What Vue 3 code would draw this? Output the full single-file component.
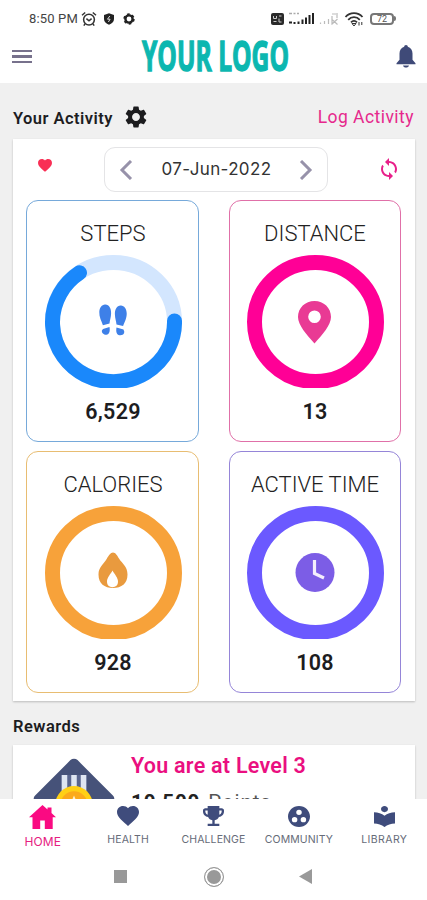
<template>
  <div class="phone">
    <div class="status-bar">
      <span class="clock">8:50 PM</span>
      <svg class="alarm" viewBox="0 0 16 16">
        <circle cx="8" cy="8.6" r="5.4" />
        <path d="M1 4.2 4.2 1.5M15 4.2 11.8 1.5M5.4 7.6 8 9.8l2.6-2.2M4 13l-1.2 1.6M12 13l1.2 1.6" />
      </svg>
      <svg class="shield" viewBox="0 0 12 12">
        <path d="M6 .3 11 2v4c0 2.800-2.200 4.800-5 5.800C3.200 10.800 1 8.800 1 6V2z" />
        <path class="bolt" d="M6.800 3 4.500 6.200h2.600L5.400 9" />
      </svg>
      <svg class="cog-small" viewBox="0 0 12 12">
        <circle cx="6" cy="6" r="3.600" />
        <circle class="teeth" cx="6" cy="6" r="4.900" />
      </svg>
      <span class="spacer"></span>
      <svg class="volte" viewBox="0 0 13 12">
        <rect width="13" height="12" rx="2" />
        <path d="M2.500 3v2.500h3V3M8 3h2.500M2.500 8.500h3M8 5.500v3.500h2.500" />
      </svg>
      <svg class="signal" viewBox="0 0 27 13">
        <path class="tiny" d="M1 1.500h3M5.500 1.500h2M9 1.500h2" />
        <path d="M1 10.500h3M6.500 12v-2M10.500 12V9.500M14.500 12V7.500M18 12V5.500M21.500 12V3M25 12V1" />
      </svg>
      <svg class="signal weak" viewBox="0 0 20 13">
        <path d="M1.500 12v-1.500M5.500 12V9M9.500 12V7M13 12V4M18 6V1M12.500 7l6 5.500M18.500 7l-6 5.500M13 2h4" />
      </svg>
      <svg class="wifi" viewBox="0 0 20 14">
        <path d="M1.500 5C6-.2 14-.2 18.500 5M4.200 7.800c3.200-3.600 8.400-3.600 11.600 0M7 10.300c1.800-1.800 4.200-1.800 6 0" />
        <path class="dot" d="M8 11.500h4L10 14zM15 10v3.500M17.800 10v3" />
      </svg>
      <span class="battery">72</span>
      <i class="battery-tip"></i>
    </div>

    <header class="app-bar">
      <div class="burger"><i></i><i></i><i></i></div>
      <svg class="logo" viewBox="0 0 148 40">
        <text x="0" y="34.500" textLength="147" lengthAdjust="spacingAndGlyphs">YOUR LOGO</text>
      </svg>
      <svg class="bell" viewBox="0 0 20 23">
        <path d="M10 0c1.100 0 1.800.8 1.800 1.800 3 .9 4.700 3.600 4.700 6.700v6.300l3 3.400v1H.5v-1l3-3.400V8.500c0-3.100 1.700-5.800 4.700-6.700C8.200.8 8.900 0 10 0zM7 20.600h6c-.4 1.500-1.500 2-3 2s-2.600-.5-3-2z" />
      </svg>
    </header>

    <main class="content">
      <div class="section-head">
        <h2>Your Activity</h2>
        <svg class="gear" viewBox="2 2 20 20">
          <path :d="gearPath" />
        </svg>
        <a class="log-link">Log Activity</a>
      </div>

      <section class="card activity">
        <div class="date-row">
          <svg class="heart" viewBox="2 3 20 18.500">
            <path :d="heartPath" />
          </svg>
          <div class="date-picker">
            <svg class="chevron" viewBox="0 0 14 20"><path d="M12 1 3 10l9 9" /></svg>
            <span>07-Jun-2022</span>
            <svg class="chevron" viewBox="0 0 14 20"><path d="m2 1 9 9-9 9" /></svg>
          </div>
          <svg class="sync" viewBox="4 1 16 22">
            <path d="M12 6v3L8 5l4-4v3c4.420 0 8 3.580 8 8 0 1.570-.46 3.030-1.240 4.260L17.300 14.800c.45-.83.7-1.790.7-2.800 0-3.310-2.690-6-6-6zM5.240 7.740 6.700 9.200C6.260 10.040 6 10.990 6 12c0 3.310 2.690 6 6 6v-3l4 4-4 4v-3c-4.420 0-8-3.580-8-8 0-1.570.46-3.030 1.240-4.260z" />
          </svg>
        </div>

        <div class="tiles">
          <div v-for="tile in tiles" :key="tile.name" :class="['tile', tile.name]">
            <h3>{{ tile.title }}</h3>
            <svg class="ring" viewBox="0 0 137 133">
              <ellipse class="track" cx="68.500" cy="67" rx="61" ry="59.500" />
              <path v-if="tile.arc" class="arc" :d="tile.arc" />
              <g v-if="tile.name === 'steps'" class="glyph">
                <path d="M60 49.500c4-.3 6.300 4 6.100 9-.1 4-1.300 6.500-1.600 10l-6.600 1.800C56.500 66 54 62 54.300 57c.2-4.200 2.500-7.300 5.700-7.500z" />
                <path d="M76 50.500c-4-.3-6.300 4-6.100 9 .1 4 1.300 6.500 1.600 10l6.600 1.500c1.400-4 3.900-8 3.600-13-.2-4.200-2.500-7.300-5.700-7.500z" />
                <path d="m58 74 6.500-2c.8 4-.2 7.500-3 7.700-2.500.2-5-1.500-4.600-4.200zM78.500 74.500l-7-2c-.8 4 .2 7.500 3 7.700 2.500.2 5-.8 4.800-3.500z" />
              </g>
              <path
                v-else-if="tile.name === 'distance'"
                class="glyph"
                fill-rule="evenodd"
                d="M67.500 46c9.300 0 16.500 6.800 16.500 16 0 8-8.500 17.500-16.500 26.500C59.500 79.500 51 70 51 62c0-9.200 7.200-16 16.500-16zm0 9.500a6.300 6.300 0 1 0 0 12.600 6.300 6.300 0 0 0 0-12.600z"
              />
              <g v-else-if="tile.name === 'calories'">
                <path class="glyph" d="M68 46.500c2.500 0 4.200 3 6 6 3.300 5.300 8.500 8 8.500 16 0 9-6 13.500-14.500 13.500s-14.500-4.500-14.500-13.500c0-7.500 5-10 8.300-15.700 1.800-3.200 3.700-6.300 6.200-6.300z" />
                <path class="cutout" d="M67.500 64.500c2 3.800 5.500 7 5.500 11 0 3.700-2.200 5.700-5.500 5.700S62 79.200 62 75.500c0-4 3.500-7.200 5.500-11z" />
              </g>
              <g v-else>
                <circle class="glyph" cx="68" cy="66.500" r="19.500" />
                <path class="hands" d="M67.500 54v13.500l9.500 4.500" />
              </g>
            </svg>
            <strong>{{ tile.value }}</strong>
          </div>
        </div>
      </section>

      <h2 class="rewards-title">Rewards</h2>
      <section class="card rewards">
        <svg class="badge" viewBox="0 0 82 82">
          <rect class="diamond" x="11" y="11" width="60" height="60" rx="5" transform="rotate(45 41 41)" />
          <path class="ribbon" d="M28 17h26v17H28z" />
          <path class="stripes" d="M31.500 17v17M41 17v17M50.500 17v17" />
          <circle class="coin" cx="41" cy="46.700" r="18.700" />
          <circle class="coin-inner" cx="41" cy="46.700" r="13.500" />
          <path class="star" d="m41 37.500 2.500 6h6l-5 4 2 6-5.500-3.500-5.500 3.500 2-6-5-4h6z" />
        </svg>
        <div class="reward-text">
          <p class="level">You are at Level 3</p>
          <p class="points"><b>10,500</b> Points</p>
        </div>
      </section>
    </main>

    <nav class="tab-bar">
      <div v-for="tab in tabs" :key="tab.label" :class="['tab', tab.name, { active: tab.active }]">
        <svg :viewBox="tab.box" preserveAspectRatio="none">
          <path :d="tab.path" fill-rule="evenodd" />
        </svg>
        <span>{{ tab.label }}</span>
      </div>
    </nav>

    <div class="system-nav">
      <i class="recent"></i>
      <i class="home-key"></i>
      <svg class="back" viewBox="0 0 13 15"><path d="M13 0v15L0 7.500z" /></svg>
    </div>
  </div>
</template>

<script setup>
const gearPath =
  'M19.140 12.940c.04-.3.06-.61.06-.94s-.02-.64-.07-.94l2.030-1.580c.18-.14.23-.41.12-.61l-1.920-3.320c-.12-.22-.37-.29-.59-.22l-2.390.96c-.5-.38-1.030-.7-1.620-.94l-.36-2.540c-.04-.24-.24-.41-.48-.41h-3.840c-.24 0-.43.17-.47.41l-.36 2.540c-.59.24-1.130.57-1.620.94l-2.390-.96c-.22-.08-.47 0-.59.22L2.740 8.870c-.12.21-.08.47.12.61l2.030 1.580c-.05.3-.09.63-.09.94s.02.64.07.94l-2.030 1.580c-.18.14-.23.41-.12.61l1.920 3.320c.12.22.37.29.59.22l2.390-.96c.5.38 1.030.7 1.620.94l.36 2.540c.05.24.24.41.48.41h3.840c.24 0 .44-.17.47-.41l.36-2.540c.59-.24 1.130-.56 1.620-.94l2.390.96c.22.08.47 0 .59-.22l1.920-3.320c.12-.22.07-.47-.12-.61l-2.010-1.580zM12 15.600c-1.980 0-3.600-1.620-3.600-3.600s1.620-3.600 3.600-3.600 3.600 1.620 3.600 3.600-1.620 3.600-3.600 3.600z'

const heartPath =
  'M12 21.350l-1.450-1.320C5.400 15.360 2 12.280 2 8.500 2 5.420 4.420 3 7.500 3c1.740 0 3.410.81 4.500 2.090C13.090 3.810 14.760 3 16.500 3 19.580 3 22 5.420 22 8.500c0 3.780-3.400 6.860-8.550 11.540L12 21.350z'

const tiles = [
  {
    name: 'steps',
    title: 'STEPS',
    value: '6,529',
    arc: 'M129.500 66A61 59.500 0 1 1 34.500 17.800'
  },
  { name: 'distance', title: 'DISTANCE', value: '13' },
  { name: 'calories', title: 'CALORIES', value: '928' },
  { name: 'time', title: 'ACTIVE TIME', value: '108' }
]

const tabs = [
  {
    name: 'home',
    label: 'HOME',
    active: true,
    box: '0 0 27 24',
    path: 'M13.500 0 18.500 4.500V2.500h4V8L27 12.200h-3.300V24h-7.900v-8.500h-4.600V24H3.500V12.200H0z'
  },
  { name: 'health', label: 'HEALTH', box: '2 3 20 18.400', path: heartPath },
  {
    name: 'challenge',
    label: 'CHALLENGE',
    box: '3 3 18 18',
    path: 'M19 5h-2V3H7v2H5c-1.100 0-2 .9-2 2v1c0 2.550 1.920 4.630 4.390 4.940.63 1.500 1.980 2.630 3.610 2.960V19H7v2h10v-2h-4v-3.100c1.630-.33 2.980-1.460 3.610-2.960C19.080 12.630 21 10.550 21 8V7c0-1.100-.9-2-2-2zM5 8V7h2v3.820C5.840 10.400 5 9.300 5 8zm14 0c0 1.300-.84 2.400-2 2.820V7h2v1z'
  },
  {
    name: 'community',
    label: 'COMMUNITY',
    box: '2 2 20 20',
    path: 'M12 2C6.480 2 2 6.480 2 12s4.480 10 10 10 10-4.480 10-10S17.520 2 12 2zM8 17.500a2.500 2.500 0 1 1 0-5 2.500 2.500 0 0 1 0 5zM9.500 8a2.500 2.500 0 1 1 5 0 2.500 2.500 0 0 1-5 0zm6.500 9.500a2.500 2.500 0 1 1 0-5 2.500 2.500 0 0 1 0 5z'
  },
  {
    name: 'library',
    label: 'LIBRARY',
    box: '3 2 18 20.500',
    path: 'M12 11.550C9.640 9.350 6.480 8 3 8v11c3.480 0 6.640 1.350 9 3.550 2.360-2.190 5.520-3.550 9-3.550V8c-3.480 0-6.640 1.350-9 3.550zM12 8c1.660 0 3-1.340 3-3s-1.340-3-3-3-3 1.340-3 3 1.340 3 3 3z'
  }
]
</script>

<style>
body {
  background: #fff;
}
</style>

<style scoped>
.phone {
  display: flex;
  flex-direction: column;
  width: 427px;
  height: 900px;
  overflow: hidden;
  background: #fff;
  color: #1d1d1f;
  font-family: Roboto, "Liberation Sans", sans-serif;
}

svg {
  display: block;
  flex: none;
}

h2,
h3,
p {
  margin: 0;
}

/* status bar */
.status-bar {
  display: flex;
  align-items: center;
  box-sizing: border-box;
  height: 37px;
  padding: 0 30px 0 29px;
}

.clock {
  width: 52px;
  font-size: 13px;
  letter-spacing: 0.150px;
  white-space: nowrap;
  color: #444;
}

.alarm {
  width: 16px;
  height: 16px;
  fill: none;
  stroke: #333;
  stroke-width: 1.5;
}

.shield {
  width: 12px;
  height: 12px;
  margin-left: 6px;
  fill: #222;
}

.bolt {
  fill: none;
  stroke: #ddd;
}

.cog-small {
  width: 12px;
  height: 12px;
  margin-left: 8px;
  fill: none;
  stroke: #222;
  stroke-width: 2.400;
}

.teeth {
  stroke-dasharray: 2.600 2.530;
  stroke-width: 1.600;
}

.spacer {
  flex: 1;
}

.volte {
  width: 13px;
  height: 12px;
  fill: #2a2a2a;
}

.volte path {
  fill: none;
  stroke: #ccc;
}

.signal {
  width: 27px;
  height: 13px;
  margin-left: 4px;
  fill: none;
  stroke: #222;
  stroke-width: 2;
}

.signal .tiny {
  stroke: #aaa;
  stroke-width: 1.500;
}

.signal.weak {
  width: 20px;
  stroke: #bbb;
  stroke-width: 1.200;
}

.wifi {
  width: 20px;
  height: 14px;
  margin-left: 5px;
  fill: none;
  stroke: #333;
  stroke-width: 1.800;
}

.wifi .dot {
  stroke-width: 1;
}

.battery {
  box-sizing: border-box;
  width: 24px;
  height: 12px;
  margin-left: 6px;
  border: 2px solid #777;
  border-radius: 4px;
  font-size: 9px;
  line-height: 8px;
  text-align: center;
  color: #555;
}

.battery-tip {
  width: 2px;
  height: 5px;
  margin-right: 1px;
  border-radius: 0 2px 2px 0;
  background: #777;
}

/* app bar */
.app-bar {
  display: flex;
  align-items: center;
  box-sizing: border-box;
  height: 46px;
  padding: 0 11px 8px 12px;
}

.burger {
  display: flex;
  flex-direction: column;
  gap: 3px;
  width: 20px;
  margin-top: 1px;
}

.burger i {
  height: 2.500px;
  background: #77718c;
}

.logo {
  width: 148px;
  height: 40px;
  margin-left: 110px;
  margin-right: auto;
  overflow: visible;
  fill: #0cb7b0;
  stroke: #0cb7b0;
  stroke-width: 1.400;
  font-family: "Open Sans", sans-serif;
  font-size: 41px;
  font-weight: 700;
}

.bell {
  width: 20px;
  height: 23px;
  fill: #3f4a78;
}

/* page body */
.content {
  box-sizing: border-box;
  height: 716px;
  padding: 0 12px 0 13px;
  overflow: hidden;
  background: #f0f0f0;
}

.section-head {
  display: flex;
  align-items: center;
  height: 56px;
}

h2 {
  font-size: 16.500px;
  font-weight: 600;
  line-height: 20px;
  letter-spacing: 0.450px;
}

.section-head h2 {
  padding-top: 15px;
}

.gear {
  width: 22px;
  height: 22px;
  margin: 12px 0 0 12px;
  fill: #1c1c1e;
}

.log-link {
  margin: 0 1px 0 auto;
  padding-top: 12px;
  font-size: 17.500px;
  letter-spacing: 0.450px;
  color: #e6288c;
}

.card {
  background: #fff;
  box-shadow: 0 1px 2px rgba(0, 0, 0, 0.220);
}

.activity {
  height: 562px;
}

.date-row {
  display: flex;
  align-items: center;
  height: 61px;
  padding: 0 17px 0 25px;
}

.heart {
  width: 14px;
  height: 13px;
  margin-bottom: 8px;
  fill: #f92f55;
}

.date-picker {
  display: flex;
  align-items: center;
  justify-content: space-between;
  box-sizing: border-box;
  width: 224px;
  height: 45px;
  margin-left: 52px;
  padding: 0 14px 0 14px;
  border: 1px solid #e4e4e6;
  border-radius: 11px;
  font-family: Inter, sans-serif;
  font-size: 17px;
  letter-spacing: 0.350px;
  color: #333;
}

.date-picker span {
  padding: 0 0 2px 1px;
}

.chevron {
  width: 14px;
  height: 20px;
  fill: none;
  stroke: #9792aa;
  stroke-width: 3;
}

.sync {
  width: 18px;
  height: 22px;
  margin-left: auto;
  margin-bottom: 1px;
  fill: #e8208a;
}

.tiles {
  display: grid;
  grid-template-columns: 173px 172px;
  grid-auto-rows: 242px;
  column-gap: 30px;
  row-gap: 9px;
  padding-left: 13px;
}

.tile {
  display: flex;
  flex-direction: column;
  align-items: center;
  box-sizing: border-box;
  border: 1px solid;
  border-radius: 12px;
}

/* the left column sits half a pixel off its centre */
.steps,
.calories {
  padding-left: 1px;
}

.tile h3 {
  margin-top: 20px;
  font-size: 22px;
  font-weight: 300;
  line-height: 26px;
  white-space: nowrap;
  color: #222;
}

.tile strong {
  margin-top: 11px;
  font-size: 21.500px;
  font-weight: 600;
  line-height: 26px;
  letter-spacing: 0.300px;
}

.ring {
  width: 137px;
  height: 133px;
  margin-top: 8px;
}

.track,
.arc {
  fill: none;
  stroke-width: 15;
}

.arc {
  stroke: #1a88fb;
  stroke-linecap: round;
}

.steps {
  border-color: #76a9da;
}

.steps .track {
  stroke: #d3e6fe;
}

.steps .glyph {
  fill: #3e80e8;
}

.distance {
  border-color: #e070a8;
}

.distance .track {
  stroke: #ff0096;
}

.distance .glyph {
  fill: #e93a94;
}

.calories {
  border-color: #e8bd72;
}

.calories .track {
  stroke: #f7a23a;
}

.calories .glyph {
  fill: #e99a3e;
}

.cutout {
  fill: #fff;
}

.time {
  border-color: #9585d8;
}

.time .track {
  stroke: #6b59ff;
}

.time .glyph {
  fill: #7c5de6;
}

.hands {
  fill: none;
  stroke: #f4eefc;
  stroke-width: 3.200;
}

/* rewards */
.rewards-title {
  padding: 16px 0 8px;
}

.rewards {
  display: flex;
  height: 110px;
}

.badge {
  width: 82px;
  height: 82px;
  margin: 13px 0 0 20px;
}

.diamond {
  fill: #465279;
}

.ribbon {
  fill: #59658e;
}

.stripes {
  stroke: #dfe6f2;
  stroke-width: 5.500;
}

.coin {
  fill: #ffd016;
}

.coin-inner {
  fill: #fbaa1c;
}

.star {
  fill: #fff0d0;
}

.reward-text {
  padding: 9px 0 0 16px;
}

.level {
  font-size: 21.500px;
  font-weight: 600;
  line-height: 24px;
  letter-spacing: 0.250px;
  color: #ea0f80;
}

.points {
  margin-top: 12px;
  font-size: 20.500px;
  line-height: 24px;
  letter-spacing: 0.900px;
  color: #555;
}

.points b {
  margin-right: 2px;
  color: #222;
}

/* tabs */
.tab-bar {
  display: grid;
  grid-template-columns: repeat(5, 1fr);
  height: 54px;
  background: #fff;
}

.tab {
  display: flex;
  flex-direction: column;
  align-items: center;
  font-family: Inter, sans-serif;
  font-size: 10.500px;
  line-height: 12px;
  letter-spacing: 0.100px;
  color: #666b78;
}

.tab svg {
  width: 21px;
  height: 20px;
  margin: 7px 0 8px;
  fill: #3f4c7c;
}

.tab.health svg {
  width: 22px;
}

.tab.community svg {
  width: 22px;
  height: 21px;
  margin-bottom: 7px;
}

.tab.library {
  letter-spacing: 0.400px;
}

.tab.library svg {
  height: 21px;
  margin-bottom: 7px;
}

.tab.active {
  font-size: 12px;
  color: #e6207f;
}

.tab.active svg {
  width: 27px;
  height: 24px;
  margin: 6px 0 7px;
  fill: #fa0a82;
}

/* android keys */
.system-nav {
  display: flex;
  align-items: center;
  height: 47px;
  padding-left: 114px;
}

.recent {
  width: 13px;
  height: 13px;
  background: #999;
}

.home-key {
  box-sizing: border-box;
  width: 20px;
  height: 20px;
  margin-left: 77px;
  border: 1px solid #999;
  border-radius: 50%;
  background: #999;
  box-shadow: inset 0 0 0 2px #fff;
}

.back {
  width: 13px;
  height: 15px;
  margin-left: 75px;
  fill: #999;
}
</style>
